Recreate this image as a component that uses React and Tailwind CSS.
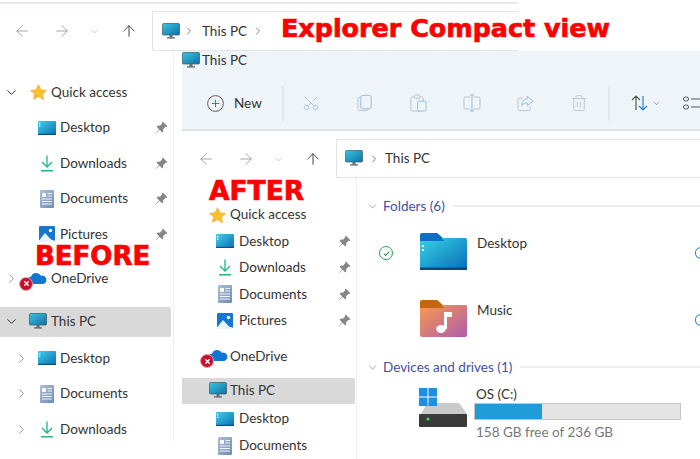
import { ArrowLeft, ArrowRight, ArrowUp, ChevronDown, ChevronRight, Scissors, Trash2, Cloud } from 'lucide-react'

function Monitor({ className = 'w-[18px] h-[17px]' }) {
  return (
    <svg viewBox="0 0 18 17" className={className}>
      <defs>
        <linearGradient id="mon" x1="0" y1="0" x2="1" y2="1">
          <stop offset="0" stopColor="#38c6e0" />
          <stop offset="1" stopColor="#0f6fa8" />
        </linearGradient>
      </defs>
      <rect x="0.5" y="0.5" width="17" height="11.5" rx="1" fill="url(#mon)" stroke="#3f5560" strokeWidth="0.7" />
      <rect x="7.5" y="12" width="3" height="2.5" fill="#5f6f78" />
      <rect x="5" y="14.3" width="8" height="1.2" fill="#4c5a62" />
    </svg>
  )
}

function Star({ className = 'w-[17px] h-[17px]' }) {
  return (
    <svg viewBox="0 0 24 24" className={className}>
      <path d="M12 1l3.4 7.2 7.8 1-5.7 5.4 1.5 7.8L12 17.6l-7 3.8 1.5-7.8L.8 9.200l7.800-1z" fill="#fbc02d" stroke="#f5a623" strokeWidth="1" strokeLinejoin="round" />
    </svg>
  )
}

function DesktopIcon() {
  return (
    <svg viewBox="0 0 18 14" className="w-[18px] h-[14px]">
      <defs>
        <linearGradient id="desk" x1="0" y1="0" x2="1" y2="1">
          <stop offset="0" stopColor="#3fd0ea" />
          <stop offset="1" stopColor="#0a6fb5" />
        </linearGradient>
      </defs>
      <rect width="18" height="14" rx="1" fill="url(#desk)" />
      <rect x="1" y="2" width="1.300" height="1.300" fill="#fff" />
      <rect x="1" y="4.500" width="1.300" height="1.300" fill="#fff" />
      <rect y="12.800" width="18" height="1.200" fill="#0b4f80" />
    </svg>
  )
}

function DownloadIcon() {
  return (
    <svg viewBox="0 0 14 17" className="w-[14px] h-[17px]" fill="none" stroke="#1fb58a" strokeWidth="1.300">
      <path d="M7 0.500v11M2 7l5 5 5-5" />
      <path d="M1 15.800h12" strokeWidth="1.500" />
    </svg>
  )
}

function DocIcon() {
  return (
    <svg viewBox="0 0 14 18" className="w-[14px] h-[18px]">
      <defs>
        <linearGradient id="doc" x1="0" y1="0" x2="1" y2="1">
          <stop offset="0" stopColor="#aebfd8" />
          <stop offset="1" stopColor="#6d8cb5" />
        </linearGradient>
      </defs>
      <rect width="14" height="18" rx="1" fill="url(#doc)" />
      <rect x="2" y="3" width="4" height="4" fill="#fff" opacity="0.9" />
      <path d="M7.500 3.500h4.500M7.500 6h4.500M2 9h10M2 11.500h10M2 14h10" stroke="#fff" strokeWidth="1" opacity="0.9" />
    </svg>
  )
}

function PicturesIcon() {
  return (
    <svg viewBox="0 0 16 16" className="w-[16px] h-[16px]">
      <rect width="16" height="16" rx="1" fill="#1677d2" />
      <circle cx="11.500" cy="4.500" r="1.700" fill="#fff" />
      <path d="M0 14.500L6 7l6 6.500 4 1.200V16H0z" fill="#e9f3fb" />
    </svg>
  )
}

function Pin() {
  return (
    <svg viewBox="0 0 12 12" className="w-[13px] h-[13px]" fill="#858585">
      <path d="M7.200 0.500l4.300 4.300-1 .7-.8-.2-2.200 2.200.1 2-1 1-2.300-2.400L1 11l-.2-.2 3-3.300L1.500 5.200l1-1 2 .1L6.700 2.100 6.500 1.300z" />
    </svg>
  )
}

function OneDriveBadge() {
  return (
    <div className="relative w-[28px] h-[20px] shrink-0">
      <svg viewBox="0 0 22 14" className="absolute left-[8px] top-[3px] w-[20px] h-[13px]">
        <path d="M5 13a4 4 0 01-.6-8A6 6 0 0115.300 4 4.500 4.500 0 0118 13z" fill="#0f78d4" />
      </svg>
      <div className="absolute left-0 -bottom-[2px] w-[14px] h-[14px] rounded-full bg-[#c8102e] border border-[#e8a0a8] flex items-center justify-center">
        <svg viewBox="0 0 8 8" className="w-[7px] h-[7px]" stroke="#fff" strokeWidth="1.500">
          <path d="M1.500 1.500l5 5M6.500 1.500l-5 5" />
        </svg>
      </div>
    </div>
  )
}

function Row({ pad, height, selected, icon, chevron, label, pin, slot, labelPad = 'ml-[4px]' }) {
  return (
    <div className={`flex items-center ${height} ${pad} ${selected ? 'bg-[#d9d9d9] rounded-r-[2px]' : ''}`}>
      {chevron}
      <div className={`flex items-center justify-center shrink-0 ${slot}`}>{icon}</div>
      <span className={`${labelPad} text-[13.5px] text-[#333] leading-none whitespace-nowrap`}>{label}</span>
      {pin && <div className="ml-auto"><Pin /></div>}
    </div>
  )
}

const Down = () => <ChevronDown size={15} strokeWidth={1.600} className="text-[#333] shrink-0" />
const Right = () => <ChevronRight size={15} strokeWidth={1.400} className="text-[#8a8a8a] shrink-0" />

function NavArrows() {
  return (
    <div className="flex items-center">
      <ArrowLeft size={18} strokeWidth={1.200} className="text-[#9a9a9a] shrink-0" />
      <ArrowRight size={18} strokeWidth={1.200} className="ml-[22px] text-[#9a9a9a] shrink-0" />
      <ChevronDown size={11} strokeWidth={1.200} className="ml-[18px] text-[#9a9a9a] shrink-0" />
      <ArrowUp size={18} strokeWidth={1.300} className="ml-[20px] text-[#444] shrink-0" />
    </div>
  )
}

function BeforeSidebar() {
  return (
    <div className="w-[174px] shrink-0 pt-[24px] pr-[5px] h-[390px] border-r border-[#efefef]">
      <Row height="h-[35px]" pad="pl-[4px]" chevron={<Down />} slot="w-[18px] ml-[10px]" icon={<Star />} label="Quick access" />
      <Row height="h-[35.500px]" pad="pl-[38px]" slot="w-[18px]" icon={<DesktopIcon />} label="Desktop" pin />
      <Row height="h-[35.500px]" pad="pl-[38px]" slot="w-[18px]" icon={<DownloadIcon />} label="Downloads" pin />
      <Row height="h-[35.500px]" pad="pl-[38px]" slot="w-[18px]" icon={<DocIcon />} label="Documents" pin />
      <Row height="h-[35.500px]" pad="pl-[38px]" slot="w-[18px]" icon={<PicturesIcon />} label="Pictures" pin />
      <Row height="h-[35.500px]" pad="pl-[4px] mt-[9px]" chevron={<Right />} slot="w-[28px]" labelPad="ml-[4px]" icon={<OneDriveBadge />} label="OneDrive" />
      <div className="mt-[10px] -mr-[3px]">
        <Row selected height="h-[30px]" pad="pl-[4px]" chevron={<Down />} slot="w-[18px] ml-[10px]" icon={<Monitor />} label="This PC" />
      </div>
      <div className="mt-[4px]">
        <Row height="h-[35.500px]" pad="pl-[14px]" chevron={<Right />} slot="w-[18px] ml-[9px]" icon={<DesktopIcon />} label="Desktop" />
        <Row height="h-[35.500px]" pad="pl-[14px]" chevron={<Right />} slot="w-[18px] ml-[9px]" icon={<DocIcon />} label="Documents" />
        <Row height="h-[35.500px]" pad="pl-[14px]" chevron={<Right />} slot="w-[18px] ml-[9px]" icon={<DownloadIcon />} label="Downloads" />
      </div>
    </div>
  )
}

function AfterSidebar() {
  return (
    <div className="w-[175px] shrink-0 pt-[24px] pr-[5px] border-r border-[#efefef]">
      <Row height="h-[26px]" pad="pl-[27px]" slot="w-[17px]" icon={<Star />} label="Quick access" />
      <Row height="h-[26.500px]" pad="pl-[34px]" slot="w-[18px]" labelPad="ml-[5px]" icon={<DesktopIcon />} label="Desktop" pin />
      <Row height="h-[26.500px]" pad="pl-[34px]" slot="w-[18px]" labelPad="ml-[5px]" icon={<DownloadIcon />} label="Downloads" pin />
      <Row height="h-[26.500px]" pad="pl-[34px]" slot="w-[18px]" labelPad="ml-[5px]" icon={<DocIcon />} label="Documents" pin />
      <Row height="h-[26.500px]" pad="pl-[34px]" slot="w-[18px]" labelPad="ml-[5px]" icon={<PicturesIcon />} label="Pictures" pin />
      <Row height="h-[26.500px]" pad="pl-[18px] mt-[9px]" slot="w-[28px]" labelPad="ml-[2px]" icon={<OneDriveBadge />} label="OneDrive" />
      <div className="mt-[8px] -mr-[4px]">
        <Row selected height="h-[26px]" pad="pl-[27px]" slot="w-[18px]" labelPad="ml-[3px]" icon={<Monitor />} label="This PC" />
      </div>
      <Row height="h-[27px] mt-[2px]" pad="pl-[34px]" slot="w-[18px]" labelPad="ml-[5px]" icon={<DesktopIcon />} label="Desktop" />
      <Row height="h-[26.500px]" pad="pl-[34px]" slot="w-[18px]" labelPad="ml-[5px]" icon={<DocIcon />} label="Documents" />
    </div>
  )
}

function FolderItem({ top, bottom, tab, art, label }) {
  return (
    <div className="flex items-start h-[67px]">
      <svg viewBox="0 0 47 37" className="w-[47px] h-[37px] ml-[63px] shrink-0">
        <defs>
          <linearGradient id={label} x1="0" y1="0" x2="1" y2="1">
            <stop offset="0" stopColor={top} />
            <stop offset="1" stopColor={bottom} />
          </linearGradient>
        </defs>
        <path d="M0 3a3 3 0 013-3h14l6 5h21a3 3 0 013 3v6H0z" fill={tab} />
        <rect y="5" width="47" height="32" rx="2" fill={`url(#${label})`} />
        <path d="M0 3a3 3 0 013-3h14l7 8H0z" fill={tab} />
        {art}
      </svg>
      <span className="ml-[10px] text-[13.500px] text-[#333] leading-[20px]">{label}</span>
      <Cloud size={18} strokeWidth={1.400} className="ml-auto -mr-[12px] mt-[11px] text-[#1b84d8] shrink-0" />
    </div>
  )
}

function SectionHead({ label }) {
  return (
    <div className="flex items-center h-[20px]">
      <ChevronDown size={13} strokeWidth={1.200} className="ml-[9px] text-[#777] shrink-0" />
      <span className="ml-[4px] text-[13.500px] text-[#44509f] whitespace-nowrap">{label}</span>
      <div className="ml-[8px] flex-1 h-[2px] bg-[#ececec]" />
    </div>
  )
}

function MainPane() {
  return (
    <div className="flex-1 min-w-0 pt-[18px] overflow-hidden">
      <SectionHead label="Folders (6)" />
      <div className="relative mt-[17px]">
        <div className="absolute left-[22px] top-[13px] w-[14px] h-[14px] rounded-full border border-[#2f9e5b] flex items-center justify-center">
          <svg viewBox="0 0 10 10" className="w-[9px] h-[9px]" fill="none" stroke="#2f9e5b" strokeWidth="1.200">
            <path d="M2 5.200l2 2 4-4.400" />
          </svg>
        </div>
        <FolderItem label="Desktop" top="#35d3e6" bottom="#0a6cb8" tab="#0b6fc4"
          art={<><rect x="2" y="12" width="2" height="2" fill="#fff" /><rect x="2" y="16" width="2" height="2" fill="#fff" /><rect y="34.500" width="47" height="2.500" fill="#0b4a78" /></>} />
        <FolderItem label="Music" top="#f79a4d" bottom="#b05cae" tab="#c4660f"
          art={<><ellipse cx="21" cy="29" rx="4.800" ry="4" fill="#fff" /><path d="M24 29V12h8v5h-5v12z" fill="#fff" /></>} />
      </div>
      <div className="-mt-[10px]">
        <SectionHead label="Devices and drives (1)" />
      </div>
      <div className="flex items-start mt-[11px]">
        <svg viewBox="0 0 48 40" className="w-[48px] h-[40px] ml-[62px] shrink-0">
          <path d="M2 26L8 15h32l8 11z" fill="#c9c9c9" />
          <rect y="26" width="48" height="13" rx="1" fill="#3a3a3a" />
          <circle cx="9" cy="31" r="1.500" fill="#35e04a" />
          <rect x="0" y="0" width="8.500" height="8.500" fill="#1c8fe0" />
          <rect x="9.500" y="0" width="8.500" height="8.500" fill="#1c8fe0" />
          <rect x="0" y="9.500" width="8.500" height="8.500" fill="#1c8fe0" />
          <rect x="9.500" y="9.500" width="8.500" height="8.500" fill="#1c8fe0" />
        </svg>
        <div className="ml-[7px] -mt-[3px] w-[207px] shrink-0">
          <div className="text-[13.500px] text-[#333] leading-[18px] pl-[2px]">OS (C:)</div>
          <div className="h-[17px] bg-[#e4e4e4] border border-[#c4c4c4]">
            <div className="h-full w-[67px] bg-[#209cd9]" />
          </div>
          <div className="text-[13.500px] text-[#777] leading-[18px] mt-[3px] pl-[2px] whitespace-nowrap">158 GB free of 236 GB</div>
        </div>
      </div>
    </div>
  )
}

function Toolbar() {
  const faded = 'text-[#b9c2c8] shrink-0'
  return (
    <div className="flex items-center h-[61px] pt-[7px] pl-[25px] border-b-2 border-[#dfe3e5] overflow-hidden">
      <svg viewBox="0 0 16 16" className="w-[17px] h-[17px] shrink-0" fill="none">
        <circle cx="8" cy="8" r="7.400" stroke="#555" strokeWidth="0.900" />
        <path d="M8 4.500v7M4.500 8h7" stroke="#1b84d8" strokeWidth="1" />
      </svg>
      <span className="ml-[10px] w-[28px] shrink-0 text-[13.500px] text-[#333]">New</span>
      <div className="ml-[20px] w-[2px] h-[35px] bg-[#e2e7ea] shrink-0" />
      <div className="ml-[18px] w-[18px] shrink-0">
        <Scissors size={18} strokeWidth={1.100} className="text-[#9cc4e4] -rotate-90" />
      </div>
      <svg viewBox="0 0 18 18" className="ml-[37px] w-[17px] h-[18px] shrink-0" fill="none" strokeWidth="1">
        <rect x="1" y="3" width="11" height="14" rx="2" stroke="#b9c2c8" />
        <rect x="4" y="1" width="11" height="14" rx="2" stroke="#8fbde6" fill="#eef4f7" />
      </svg>
      <svg viewBox="0 0 18 18" className="ml-[36px] w-[17px] h-[18px] shrink-0" fill="none" strokeWidth="1">
        <rect x="1" y="2.500" width="13" height="15" rx="2" stroke="#b9c2c8" />
        <rect x="4.500" y="0.500" width="6" height="3.500" rx="1" stroke="#b9c2c8" fill="#eef4f7" />
        <rect x="8" y="7" width="9" height="10.500" rx="1.500" stroke="#8fbde6" fill="#eef4f7" />
      </svg>
      <svg viewBox="0 0 18 18" className="ml-[36px] w-[18px] h-[18px] shrink-0" fill="none" strokeWidth="1">
        <path d="M7 3H2.500A1.500 1.500 0 001 4.500v9A1.500 1.500 0 002.500 15H7M11 3h4.500A1.500 1.500 0 0117 4.500v9a1.500 1.500 0 01-1.500 1.500H11" stroke="#b9c2c8" />
        <path d="M9 1v16M7 1h4M7 17h4" stroke="#8fbde6" />
      </svg>
      <svg viewBox="0 0 18 18" className="ml-[36px] w-[17px] h-[18px] shrink-0" fill="none" strokeWidth="1">
        <path d="M6 4H3a2 2 0 00-2 2v9a2 2 0 002 2h9a2 2 0 002-2v-2" stroke="#b9c2c8" />
        <path d="M11 2l6 5-6 5V9C8 9 6 10 5 12c0-4 2-7 6-7.500z" stroke="#8fbde6" />
      </svg>
      <div className="ml-[36px] shrink-0">
        <Trash2 size={18} strokeWidth={1.100} className={faded} />
      </div>
      <div className="ml-[20px] w-[2px] h-[35px] bg-[#e2e7ea] shrink-0" />
      <svg viewBox="0 0 18 16" className="ml-[21px] w-[18px] h-[16px] shrink-0" fill="none" strokeWidth="1.200">
        <path d="M5 15V1M1 5l4-4 4 4" stroke="#555" />
        <path d="M12 1v14M8 11l4 4 4-4" stroke="#1b84d8" />
      </svg>
      <ChevronDown size={9} strokeWidth={1.500} className="ml-[3px] text-[#555] shrink-0" />
      <svg viewBox="0 0 18 16" className="ml-[22px] w-[18px] h-[16px] shrink-0" fill="none" stroke="#555" strokeWidth="1">
        <rect x="0.500" y="2" width="5" height="4" rx="2" />
        <rect x="0.500" y="10" width="5" height="4" rx="2" />
        <path d="M8 4h10M8 12h10" />
      </svg>
    </div>
  )
}

export default function App() {
  return (
    <div className="relative w-[700px] h-[459px] overflow-hidden bg-white font-['Lato',sans-serif]">
      {/* BEFORE window: top nav */}
      <div className="w-[518px] h-[51px] pt-[2px]">
        <div className="h-[2px] bg-[#e3e8e8]" />
        <div className="flex items-start">
          <div className="w-[152px] shrink-0 pl-[13px] pt-[18px]">
            <NavArrows />
          </div>
          <div className="flex-1 h-[40px] mt-[7px] border border-r-0 border-[#e4e4e4] flex items-center pl-[9px]">
            <Monitor />
            <ChevronRight size={12} strokeWidth={1.500} className="ml-[3px] text-[#555]" />
            <span className="ml-[7px] text-[13.500px] text-[#333]">This PC</span>
            <ChevronRight size={12} strokeWidth={1.500} className="ml-[5px] text-[#555]" />
          </div>
        </div>
      </div>

      <div className="flex">
        <BeforeSidebar />
        {/* AFTER window */}
        <div className="ml-[8px] flex-1 min-w-0">
          <div className="bg-[#eef4f7]">
            <div className="flex items-center h-[19px]">
              <Monitor />
              <span className="ml-[2px] text-[13.500px] text-[#333] leading-none">This PC</span>
            </div>
            <Toolbar />
          </div>
          <div className="flex items-end h-[47px]">
            <div className="w-[154px] shrink-0 pl-[15px] pb-[10px]">
              <NavArrows />
            </div>
            <div className="flex-1 h-[39px] border border-r-0 border-[#e4e4e4] flex items-center pl-[8px]">
              <Monitor />
              <ChevronRight size={12} strokeWidth={1.500} className="ml-[5px] text-[#555]" />
              <span className="ml-[5px] text-[13.500px] text-[#333]">This PC</span>
            </div>
          </div>
          <div className="flex h-[281px]">
            <AfterSidebar />
            <MainPane />
          </div>
        </div>
      </div>

      {/* red annotations pasted over the screenshots */}
      <div className="absolute left-[281px] top-[14px] text-[25.400px] font-bold text-[#ff0000] leading-[28px] whitespace-nowrap font-['DejaVu_Sans',sans-serif] [-webkit-text-stroke:0.7px_#ff0000]">Explorer Compact view</div>
      <div className="absolute left-[209px] top-[180px] text-[26.500px] font-bold text-[#ff0000] leading-[22px] font-['DejaVu_Sans',sans-serif] [-webkit-text-stroke:0.7px_#ff0000]">AFTER</div>
      <div className="absolute left-[35px] top-[245px] text-[26px] font-bold text-[#ff0000] leading-[22px] font-['DejaVu_Sans',sans-serif] [-webkit-text-stroke:0.7px_#ff0000]">BEFORE</div>
    </div>
  )
}
